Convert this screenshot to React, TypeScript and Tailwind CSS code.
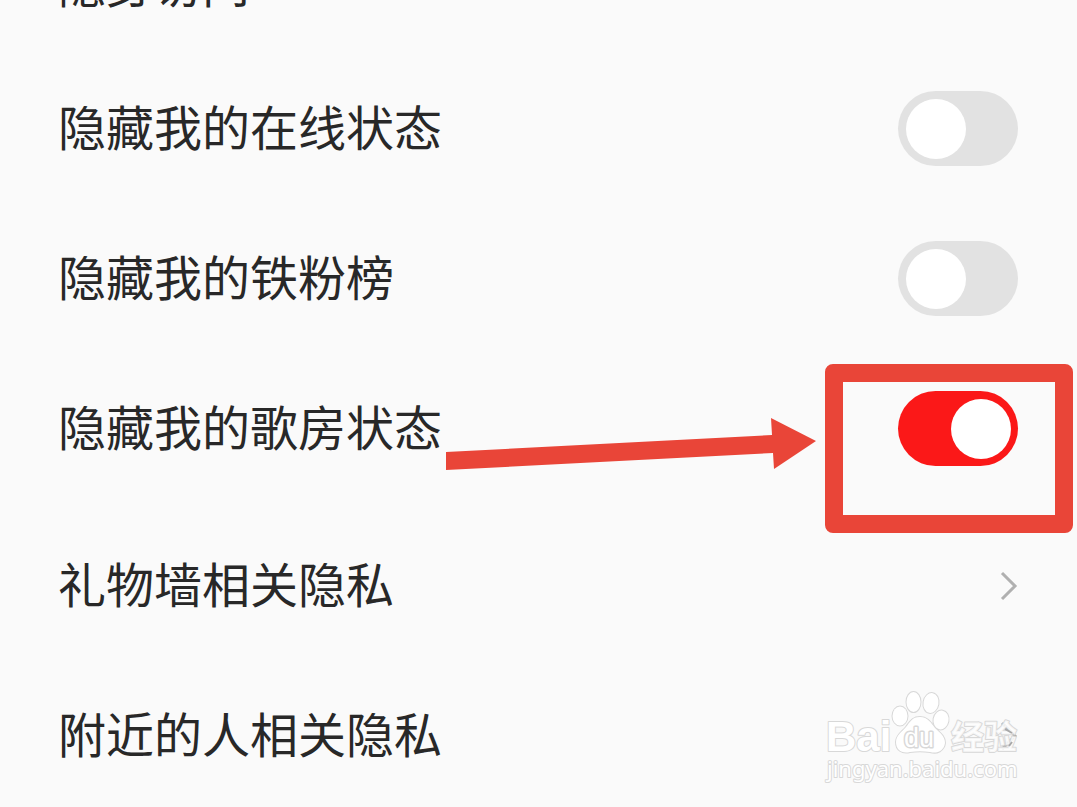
import React, { useState } from "react";

const ROW = "relative flex h-[150px] items-center justify-between pr-[59px] pl-[58px]";

function Toggle({ id, defaultOn = false }: { id: string; defaultOn?: boolean }) {
    const [on, setOn] = useState(defaultOn);

    return (
        <input
            id={id}
            type="checkbox"
            role="switch"
            checked={on}
            onChange={e => setOn(e.target.checked)}
            className="h-[75px] w-[120px] shrink-0 cursor-pointer appearance-none rounded-full bg-[#e2e2e2] p-2 before:block before:size-[60px] before:rounded-full before:bg-white before:content-[''] checked:bg-[#fb1818] checked:before:ml-[45px]"
        />
    );
}

function SwitchRow({
    id,
    label,
    defaultOn,
    children,
}: {
    id: string;
    label: string;
    defaultOn?: boolean;
    children?: React.ReactNode;
}) {
    return (
        <li className={ROW}>
            <label htmlFor={id} className="pb-1.5">
                {label}
            </label>
            <Toggle id={id} defaultOn={defaultOn} />
            {children}
        </li>
    );
}

function LinkRow({ href, label }: { href: string; label: string }) {
    return (
        <li>
            <a href={href} className={ROW}>
                <span className="pb-2">{label}</span>
                <svg width="18" height="30" viewBox="0 0 18 30" fill="none" aria-hidden="true">
                    <path d="M2 2 L15 15 L2 28" stroke="#b0b0b0" strokeWidth="3" />
                </svg>
            </a>
        </li>
    );
}

// Arrow and frame that point out the switch to tap
function Highlight() {
    return (
        <div className="pointer-events-none absolute inset-0">
            <svg
                className="absolute top-[65px] right-[260px]"
                width="372"
                height="52"
                viewBox="0 0 372 52"
                aria-hidden="true"
            >
                <path d="M1 34 L327 17 L326 0 L371 23 L329 51 L328 35 L1 52 Z" fill="#e94538" />
            </svg>
            <div className="absolute top-[11px] right-1 h-[169px] w-[248px] rounded-lg border-[18px] border-[#e94538]" />
        </div>
    );
}

function Watermark() {
    return (
        <svg
            className="pointer-events-none absolute right-[54px] bottom-[18px]"
            width="200"
            height="100"
            viewBox="0 0 200 100"
            fill="#fff"
            stroke="#d8d8d8"
            strokeWidth="2"
            strokeLinejoin="round"
            paintOrder="stroke"
        >
            <text x="3" y="62" fontFamily="Liberation Sans, Arial, sans-serif" fontWeight="700" fontSize="42">
                Bai
            </text>
            <g>
                <ellipse cx="77" cy="27" rx="7.5" ry="9.5" />
                <ellipse cx="90.5" cy="13" rx="7" ry="10" />
                <ellipse cx="108" cy="14" rx="7.5" ry="10" transform="rotate(10 108 14)" />
                <ellipse cx="118" cy="31" rx="7.5" ry="9.5" transform="rotate(10 118 31)" />
                <path d="M97 28 C105 28 108 34 112 39 C117 44 122 47 122 54 C121 62 114 65 107 63 C100 62 94 62 87 63 C79 65 73 61 73 53 C73 46 79 43 83 38 C87 33 89 28 97 28 Z" />
            </g>
            <text x="81" y="58" fontFamily="Liberation Sans, Arial, sans-serif" fontSize="27" strokeWidth="3">
                du
            </text>
            <text
                x="128"
                y="60"
                fontFamily="Noto Sans CJK SC, sans-serif"
                fontWeight="700"
                fontSize="33"
                fillOpacity="0.8"
            >
                经验
            </text>
            <path d="M182 40 l7 4 M186 57 l3 -4" fill="none" stroke="#a8a8a8" strokeWidth="2" />
            <text x="4" y="88" fontFamily="Noto Sans, sans-serif" fontSize="22">
                jingyan.baidu.com
            </text>
        </svg>
    );
}

export default function App() {
    return (
        <main
            lang="zh-CN"
            className="relative h-screen overflow-hidden bg-[#fafafa] font-['Noto_Sans_CJK_SC',sans-serif] text-5xl text-[#282828]"
        >
            <ul className="-mt-[85px]">
                <li className="flex h-[138px] items-center pb-1 pl-[58px]">隐身访问</li>
                <SwitchRow id="online" label="隐藏我的在线状态" />
                <SwitchRow id="fans" label="隐藏我的铁粉榜" />
                <SwitchRow id="room" label="隐藏我的歌房状态" defaultOn>
                    <Highlight />
                </SwitchRow>
            </ul>
            <ul className="mt-2">
                <LinkRow href="#gifts" label="礼物墙相关隐私" />
                <LinkRow href="#nearby" label="附近的人相关隐私" />
            </ul>
            <Watermark />
        </main>
    );
}
